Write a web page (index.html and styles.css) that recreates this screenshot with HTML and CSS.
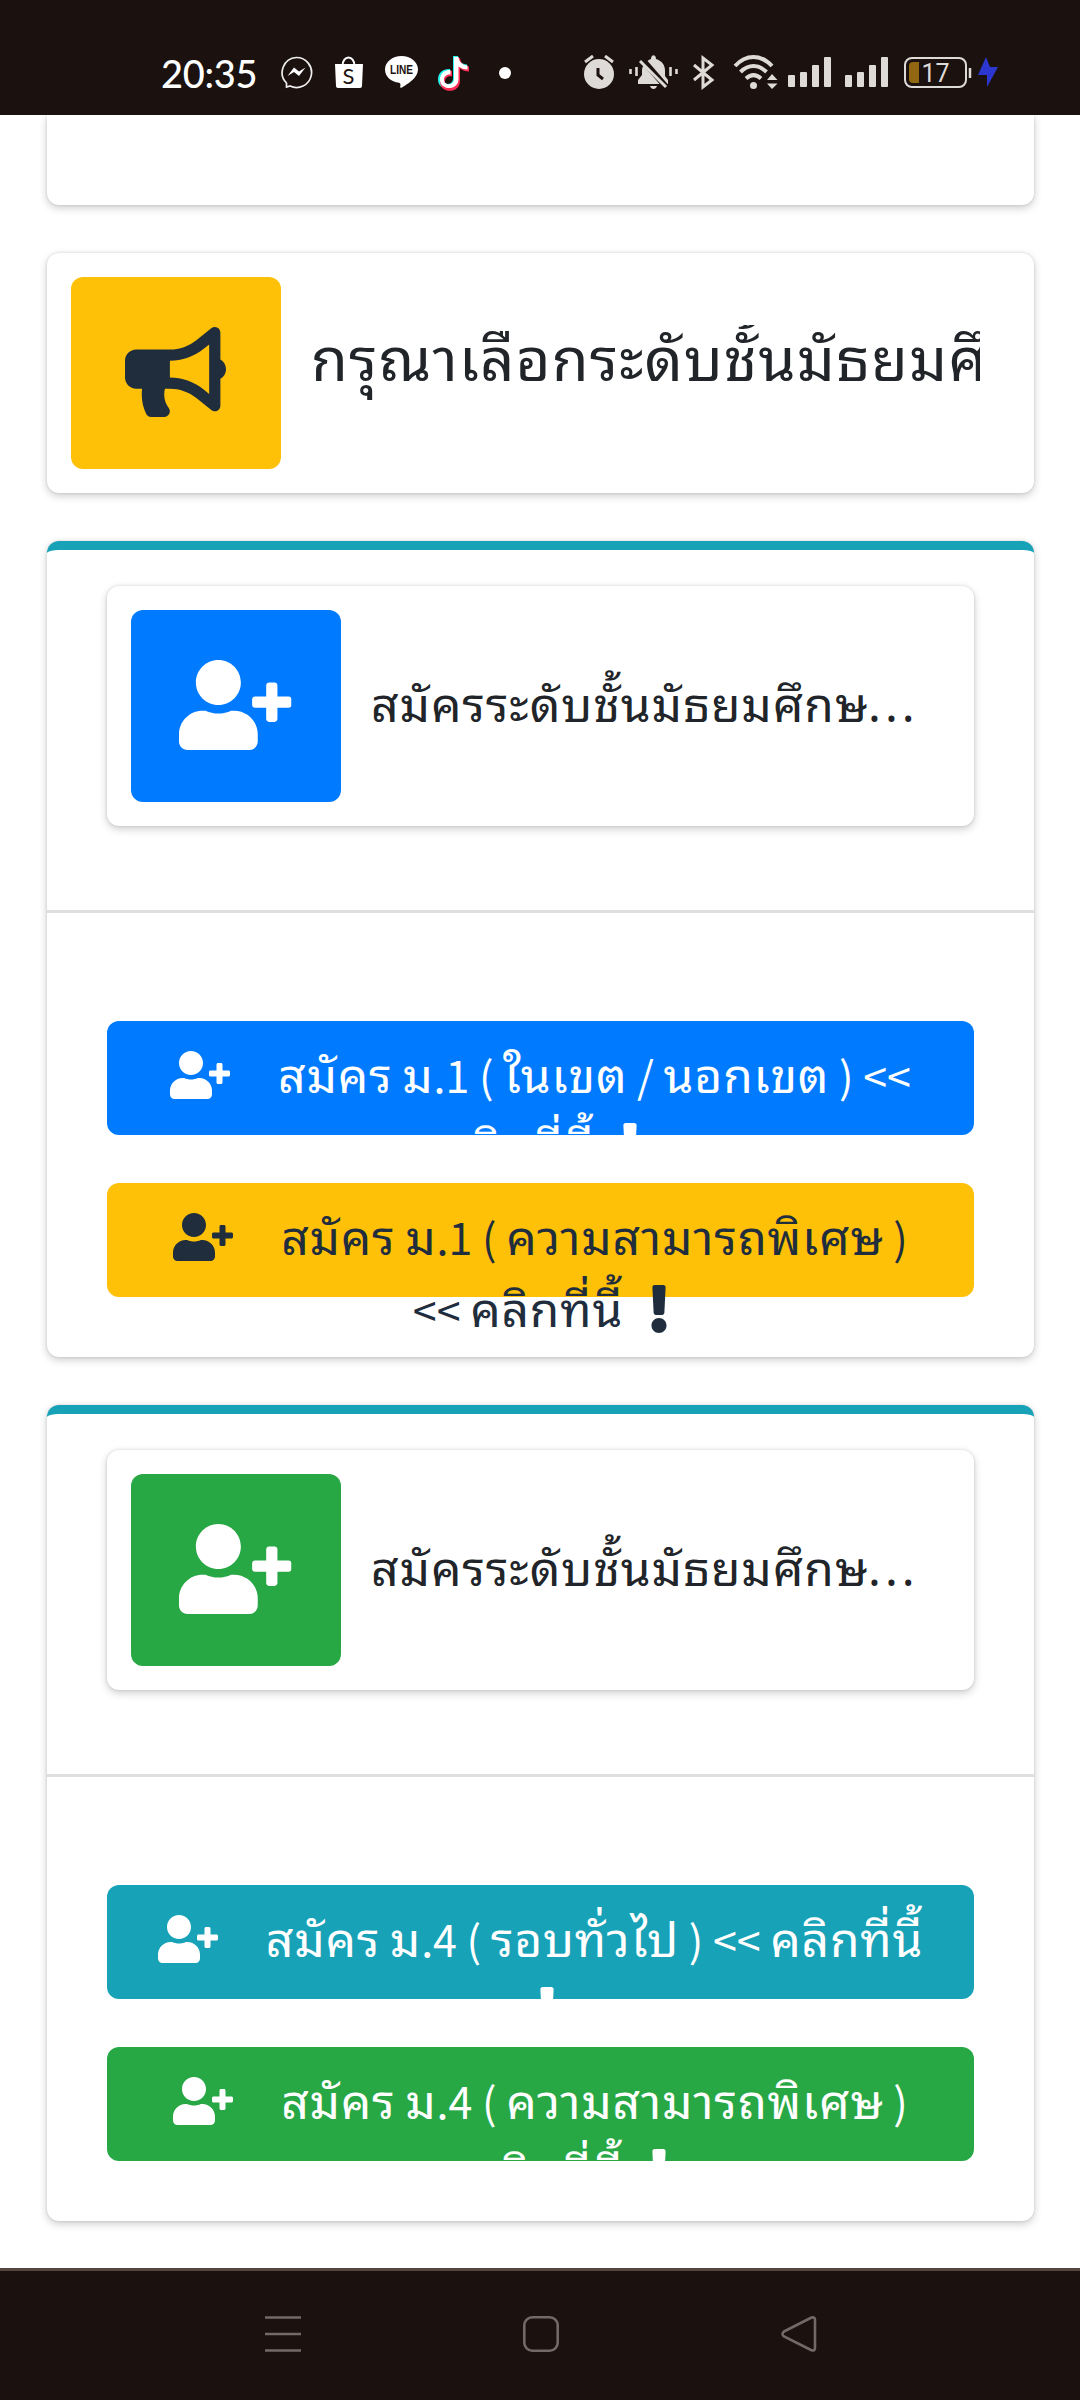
FILE: index.html
```html
<!DOCTYPE html>
<html lang="th">
  <head>
    <meta charset="utf-8" />
    <title>สมัครเรียน</title>
    <link rel="stylesheet" href="styles.css">
  </head>
  <body>
    <!-- icon shapes used more than once -->
    <svg class="defs" width="0" height="0">
      <symbol id="user-plus" viewBox="0 0 640 512">
        <path d="M624 208h-64v-64c0-8.800-7.200-16-16-16h-32c-8.800 0-16 7.200-16 16v64h-64c-8.800 0-16 7.200-16 16v32c0 8.800 7.200 16 16 16h64v64c0 8.800 7.200 16 16 16h32c8.800 0 16-7.200 16-16v-64h64c8.800 0 16-7.200 16-16v-32c0-8.800-7.200-16-16-16zm-400 48c70.700 0 128-57.300 128-128S294.700 0 224 0 96 57.300 96 128s57.300 128 128 128zm89.600 32h-16.700c-22.200 10.200-46.900 16-72.900 16s-50.600-5.800-72.900-16h-16.700C60.200 288 0 348.200 0 422.400V464c0 26.500 21.500 48 48 48h352c26.500 0 48-21.500 48-48v-41.600c0-74.200-60.200-134.400-134.400-134.400z" />
      </symbol>
      <symbol id="exclamation" viewBox="0 0 192 512">
        <path d="M176 432c0 44.112-35.888 80-80 80s-80-35.888-80-80 35.888-80 80-80 80 35.888 80 80zM25.260 25.199l13.600 272C39.499 309.972 50.041 320 62.830 320h66.340c12.789 0 23.331-10.028 23.970-22.801l13.600-272C167.425 11.490 156.496 0 142.770 0H49.230C35.504 0 24.575 11.490 25.260 25.199z" />
      </symbol>
      <symbol id="signal" viewBox="0 0 44 31">
        <rect x="0" y="18" width="7" height="12" rx="1" />
        <rect x="12" y="15" width="7" height="15" rx="1" />
        <rect x="24" y="8" width="7" height="22" rx="1" />
        <rect x="36" y="0" width="7" height="30" rx="1" />
      </symbol>
    </svg>

    <header class="status-bar">
      <span class="time">20:35</span>
      <svg class="messenger" width="33" height="33" viewBox="0 0 33 33">
        <path d="M16.500 1.500a15 15 0 1 1-6.500 28.500L6.500 31V27A15 15 0 0 1 16.500 1.500z" fill="none" stroke="#eee" stroke-width="1.700" />
        <path d="M7.500 20l6.500-8.500 5 4 6.500-4-6.500 8.500-5-4z" fill="#fff" />
      </svg>
      <svg class="shop" width="30" height="33" viewBox="0 0 30 33">
        <path d="M8.500 10C8.500-1.500 20.500-1.500 20.500 10" fill="none" stroke="#fff" stroke-width="2" />
        <path d="M1 8h28l-1 22a2 2 0 0 1-2 2H4a2 2 0 0 1-2-2z" fill="#fff" />
        <text class="letter" x="14.500" y="28" text-anchor="middle" font-size="22">S</text>
      </svg>
      <svg class="line-app" width="33" height="33" viewBox="0 0 33 33">
        <path d="M16.500 0C7.400 0 0 6 0 13.500c0 7 6 12.300 14 13.200 2 .4 1.500 2 1.200 4.300 0 1 .7 1 1.600.5C22 28.500 33 22 33 13.500 33 6 25.600 0 16.500 0z" fill="#fff" />
        <text x="16.500" y="18" text-anchor="middle" font-size="12.500" font-weight="bold" textLength="23" lengthAdjust="spacingAndGlyphs">LINE</text>
      </svg>
      <svg class="tiktok" width="33" height="36" viewBox="0 0 33 36">
        <path d="M16 1h5c.5 5 4 8 9 8.500v5c-3.500 0-6.500-1-9-3v12.500c0 13-20 13-20 .5 0-7 5.500-11 12-10.500v5.500c-4-1-7 1.500-7 5 0 6 10 6 10-1z" fill="#25f4ee" />
        <path d="M18 3h5c.5 5 4 8 9 8.500v5c-3.500 0-6.500-1-9-3v12.500c0 13-20 13-20 .5 0-7 5.500-11 12-10.500v5.500c-4-1-7 1.500-7 5 0 6 10 6 10-1z" fill="#fe2c55" />
        <path d="M17 2h4.500c.5 5 4 8 9 8.500v4c-3.500 0-6.500-1-9-3v12.500c0 12-18.500 12-18.500.5 0-6 4.500-10 10.500-9.500v4.500c-4-.5-6.500 2-6.500 5 0 7 10.500 6 10-1z" fill="#fff" />
      </svg>
      <span class="dot"></span>

      <svg class="alarm" width="32" height="35" viewBox="0 0 32 35">
        <circle cx="16" cy="19" r="15" fill="#dedad8" />
        <path d="M2 7l8-6M30 7l-8-6" stroke="#dedad8" stroke-width="3" />
        <path d="M15 13v7l5 4" fill="none" stroke="#1b110e" stroke-width="3" />
      </svg>
      <svg class="bell" width="49" height="35" viewBox="0 0 49 35">
        <path d="M9 29v-4l4-5v-4c0-6 4-10 9-12 0-5 5-5 5 0 6 2 9 6 9 12v5l3 4v4zM21 31h7c-1 4-6 4-7 0z" fill="#dedad8" />
        <path d="M12 3l26 30" stroke="#1b110e" stroke-width="6" />
        <path d="M1.500 14v5M7.500 12v9M41.500 12v9M47.500 14v5" stroke="#dedad8" stroke-width="2.600" />
        <path d="M11 6l26 26" stroke="#dedad8" stroke-width="3" />
      </svg>
      <svg class="bluetooth" width="22" height="35" viewBox="0 0 22 35">
        <path d="M1 10l18 15-9 7V3l9 7L1 25" fill="none" stroke="#dedad8" stroke-width="3" />
      </svg>
      <svg class="wifi" width="45" height="35" viewBox="0 0 45 35">
        <path d="M2 11c11-12 26-12 37 0M7.500 17c8-8 18-8 26 0M13 23.500c5-4.500 10-4.500 15 0" fill="none" stroke="#dedad8" stroke-width="4" />
        <circle cx="20.500" cy="30.500" r="3.500" fill="#dedad8" />
        <path d="M34 25l5-6 5.500 6zM34 28.500h10.500L39 34z" fill="#dedad8" />
      </svg>
      <svg class="signal" width="44" height="31"><use href="#signal" /></svg>
      <svg class="signal second" width="44" height="31"><use href="#signal" /></svg>
      <svg class="battery" width="68" height="32" viewBox="0 0 68 32">
        <rect x="1" y="1" width="61" height="29" rx="7" fill="none" stroke="#dedad8" stroke-width="2" />
        <path d="M66 11v10" stroke="#dedad8" stroke-width="2.500" />
        <path d="M15 5v21H9q-4 0-4-4V9q0-4 4-4z" fill="#916711" />
        <text class="level" x="31.500" y="24.500" text-anchor="middle" font-size="25" fill="#dedad8">17</text>
      </svg>
      <svg class="bolt" width="20" height="31" viewBox="0 0 20 31">
        <path d="M8 0L0 18h9v12L20 10h-8z" fill="#2b37cf" />
      </svg>
    </header>

    <main class="content">
      <div class="card card-cut"></div>

      <div class="info-box">
        <span class="info-box-icon bg-warning">
          <svg width="101" height="90" viewBox="0 0 576 512">
            <path d="M576 240c0-23.630-12.950-44.040-32-55.120V32.010C544 23.260 537.020 0 512 0c-7.120 0-14.190 2.380-19.980 7.020l-85.030 68.030C364.280 109.190 310.660 128 256 128H64c-35.350 0-64 28.650-64 64v96c0 35.350 28.650 64 64 64h33.700c-1.390 10.480-2.180 21.140-2.180 32 0 39.770 9.260 77.350 25.560 110.940 5.190 10.690 16.520 17.060 28.400 17.060h74.280c26.050 0 41.690-29.840 25.900-50.560-16.400-21.520-26.150-48.360-26.150-77.440 0-11.110 1.620-21.790 4.410-32H256c54.660 0 108.280 18.810 150.980 52.950l85.030 68.030a32.023 32.023 0 0 0 19.980 7.020c24.920 0 32-22.780 32-32V295.130C563.050 284.040 576 263.630 576 240zm-96 141.420l-33.050-26.440C392.950 311.780 325.120 288 256 288v-96c69.120 0 136.950-23.780 190.950-66.980L480 98.580v282.840z" />
          </svg>
        </span>
        <div class="info-box-content">
          <span class="notice">กรุณาเลือกระดับชั้นมัธยมศึกษา</span>
        </div>
      </div>

      <div class="card card-outline">
        <div class="card-header">
          <div class="info-box">
            <span class="info-box-icon bg-primary"><svg width="112.500" height="90"><use href="#user-plus" /></svg></span>
            <div class="info-box-content">
              <span class="info-box-text">สมัครระดับชั้นมัธยมศึกษ<span class="dots">...</span></span>
            </div>
          </div>
        </div>
        <div class="card-body">
          <a class="btn bg-primary" href="#">
            <svg class="lead" width="60" height="48"><use href="#user-plus" /></svg>สมัคร<span class="en"> </span>ม<span class="en">.1 ( </span>ในเขต<span class="en"> / </span>นอกเขต<span class="en"> ) &lt;&lt;</span><br />
            คลิกที่นี้<svg class="mark" width="18" height="48"><use href="#exclamation" /></svg>
          </a>
          <a class="btn bg-warning" href="#">
            <svg class="lead" width="60" height="48"><use href="#user-plus" /></svg>สมัคร<span class="en"> </span>ม<span class="en">.1 ( </span>ความสามารถพิเศษ<span class="en"> )</span><br />
            <span class="en">&lt;&lt; </span>คลิกที่นี้<svg class="mark" width="18" height="48"><use href="#exclamation" /></svg>
          </a>
        </div>
      </div>

      <div class="card card-outline">
        <div class="card-header">
          <div class="info-box">
            <span class="info-box-icon bg-success"><svg width="112.500" height="90"><use href="#user-plus" /></svg></span>
            <div class="info-box-content">
              <span class="info-box-text">สมัครระดับชั้นมัธยมศึกษ<span class="dots">...</span></span>
            </div>
          </div>
        </div>
        <div class="card-body">
          <a class="btn bg-info" href="#">
            <svg class="lead" width="60" height="48"><use href="#user-plus" /></svg>สมัคร<span class="en"> </span>ม<span class="en">.4 ( </span>รอบทั่วไป<span class="en"> ) &lt;&lt; </span>คลิกที่นี้<br />
            <svg class="mark-alone" width="18" height="48"><use href="#exclamation" /></svg>
          </a>
          <a class="btn bg-success" href="#">
            <svg class="lead" width="60" height="48"><use href="#user-plus" /></svg>สมัคร<span class="en"> </span>ม<span class="en">.4 ( </span>ความสามารถพิเศษ<span class="en"> )</span><br />
            <span class="en">&lt;&lt; </span>คลิกที่นี้<svg class="mark" width="18" height="48"><use href="#exclamation" /></svg>
          </a>
        </div>
      </div>
    </main>

    <nav class="nav-bar">
      <svg width="36" height="36" viewBox="0 0 36 36"><path d="M0 1.500h36M0 18h36M0 34.500h36" /></svg>
      <svg width="36" height="36" viewBox="0 0 36 36"><rect x="1.300" y="1.300" width="33.400" height="33.400" rx="8" /></svg>
      <svg width="36" height="36" viewBox="0 0 36 36"><path d="M3 15.500L30 1.800q4-1.500 4 2V32q0 3.500-4 2L3 20.500q-3-2.500 0-5z" /></svg>
    </nav>
  </body>
</html>
```
FILE: styles.css
```css
* {
  box-sizing: border-box;
}
body {
  margin: 0;
  height: 2400px;
  display: flex;
  flex-direction: column;
  overflow: hidden;
  background-color: #fff;
  color: #212529;
  font-family: "Noto Sans Thai Looped", "Noto Looped Thai", Loma, Waree, "Noto Sans Thai", "Noto Sans", sans-serif;
  font-size: 48px;
  line-height: 1.5;
}
svg {
  fill: currentColor;
}
.defs {
  display: none;
}

/* phone status bar */
.status-bar {
  height: 115px;
  flex: none;
  display: flex;
  align-items: center;
  padding: 30px 0 0 161px;
  background-color: #1b110e;
  color: #dedad8;
}
.status-bar svg {
  flex: none;
}
.status-bar text {
  font-family: "Liberation Sans", sans-serif;
}
.status-bar .level {
  font-family: Roboto, sans-serif;
}
.status-bar .letter {
  font-family: Lato, sans-serif;
}
.shop text,
.line-app text {
  fill: #1b110e;
}
.time {
  width: 119px;
  color: #fff;
  font-family: Lato, sans-serif;
  font-size: 38px;
  font-weight: 500;
  line-height: 42px;
  letter-spacing: -0.3px;
}
.shop {
  margin-left: 21px;
}
.line-app {
  margin-left: 21px;
}
.tiktok {
  margin-left: 19px;
}
.dot {
  width: 12px;
  height: 12px;
  margin-left: 29px;
  border-radius: 50%;
  background-color: #fff;
}
.alarm {
  margin-left: 72px;
}
.bell {
  margin-left: 14px;
}
.bluetooth {
  margin-left: 15px;
}
.wifi {
  margin-left: 18px;
}
.signal {
  margin-left: 10px;
}
.signal.second {
  margin-left: 13px;
}
.battery {
  margin-left: 15px;
}
.bolt {
  margin-left: 6px;
}

/* page */
.content {
  flex: 1;
  padding: 0 46px 0 47px;
  overflow: hidden;
}
.card,
.info-box {
  margin-bottom: 48px;
  border-radius: 12px;
  background-color: #fff;
  box-shadow: 0 0 3px rgba(0, 0, 0, 0.125), 0 3px 9px rgba(0, 0, 0, 0.2);
}
.card-cut {
  height: 90px;
  border-radius: 0 0 12px 12px;
}
.card-outline {
  height: 816px;
  border-top: 9px solid #17a2b8;
}
.card-header {
  height: 363px;
  padding: 36px 60px 0;
  border-bottom: 3px solid #dfdfdf;
}
.card-body {
  padding: 108px 60px 0;
}
.info-box {
  display: flex;
  height: 240px;
  padding: 24px;
}
.info-box-icon {
  display: flex;
  align-items: center;
  justify-content: center;
  flex: none;
  width: 210px;
  padding: 0 1px 2px 0;
  border-radius: 12px;
}
.info-box-content {
  display: flex;
  flex-direction: column;
  justify-content: center;
  flex: 1;
  min-width: 0;
  padding: 0 30px;
}
.notice {
  height: 96px;
  overflow: hidden;
  font-size: 60px;
  line-height: 58px;
  letter-spacing: 1.1px;
  white-space: nowrap;
}
.info-box-text {
  padding-bottom: 11px;
  letter-spacing: 0.9px;
  white-space: nowrap;
}
.dots {
  letter-spacing: 4px;
}

.bg-primary {
  background-color: #007bff;
  color: #fff;
}
.bg-warning {
  background-color: #ffc107;
  color: #1f2d3d;
}
.bg-info {
  background-color: #17a2b8;
  color: #fff;
}
.bg-success {
  background-color: #28a745;
  color: #fff;
}

.btn {
  display: block;
  height: 114px;
  margin-bottom: 48px;
  padding: 15px 39px;
  border-radius: 12px;
  letter-spacing: 0.8px;
  text-align: center;
  text-decoration: none;
  white-space: nowrap;
}
.btn svg {
  vertical-align: -6px;
}
/* latin part of a label */
.en {
  font-family: "Noto Sans CJK JP", sans-serif;
  font-size: 43px;
  line-height: 1;
  letter-spacing: 0;
}
.lead {
  margin-right: 48px;
}
.mark {
  margin-left: 27px;
}
.mark-alone {
  margin-left: 12px;
}

/* phone navigation bar */
.nav-bar {
  height: 132px;
  flex: none;
  display: flex;
  justify-content: space-between;
  padding: 45px 263px 0 265px;
  border-top: 3px solid #55463f;
  background-color: #1b110e;
}
.nav-bar svg {
  fill: none;
  stroke: #736966;
  stroke-width: 2.6;
}
```
